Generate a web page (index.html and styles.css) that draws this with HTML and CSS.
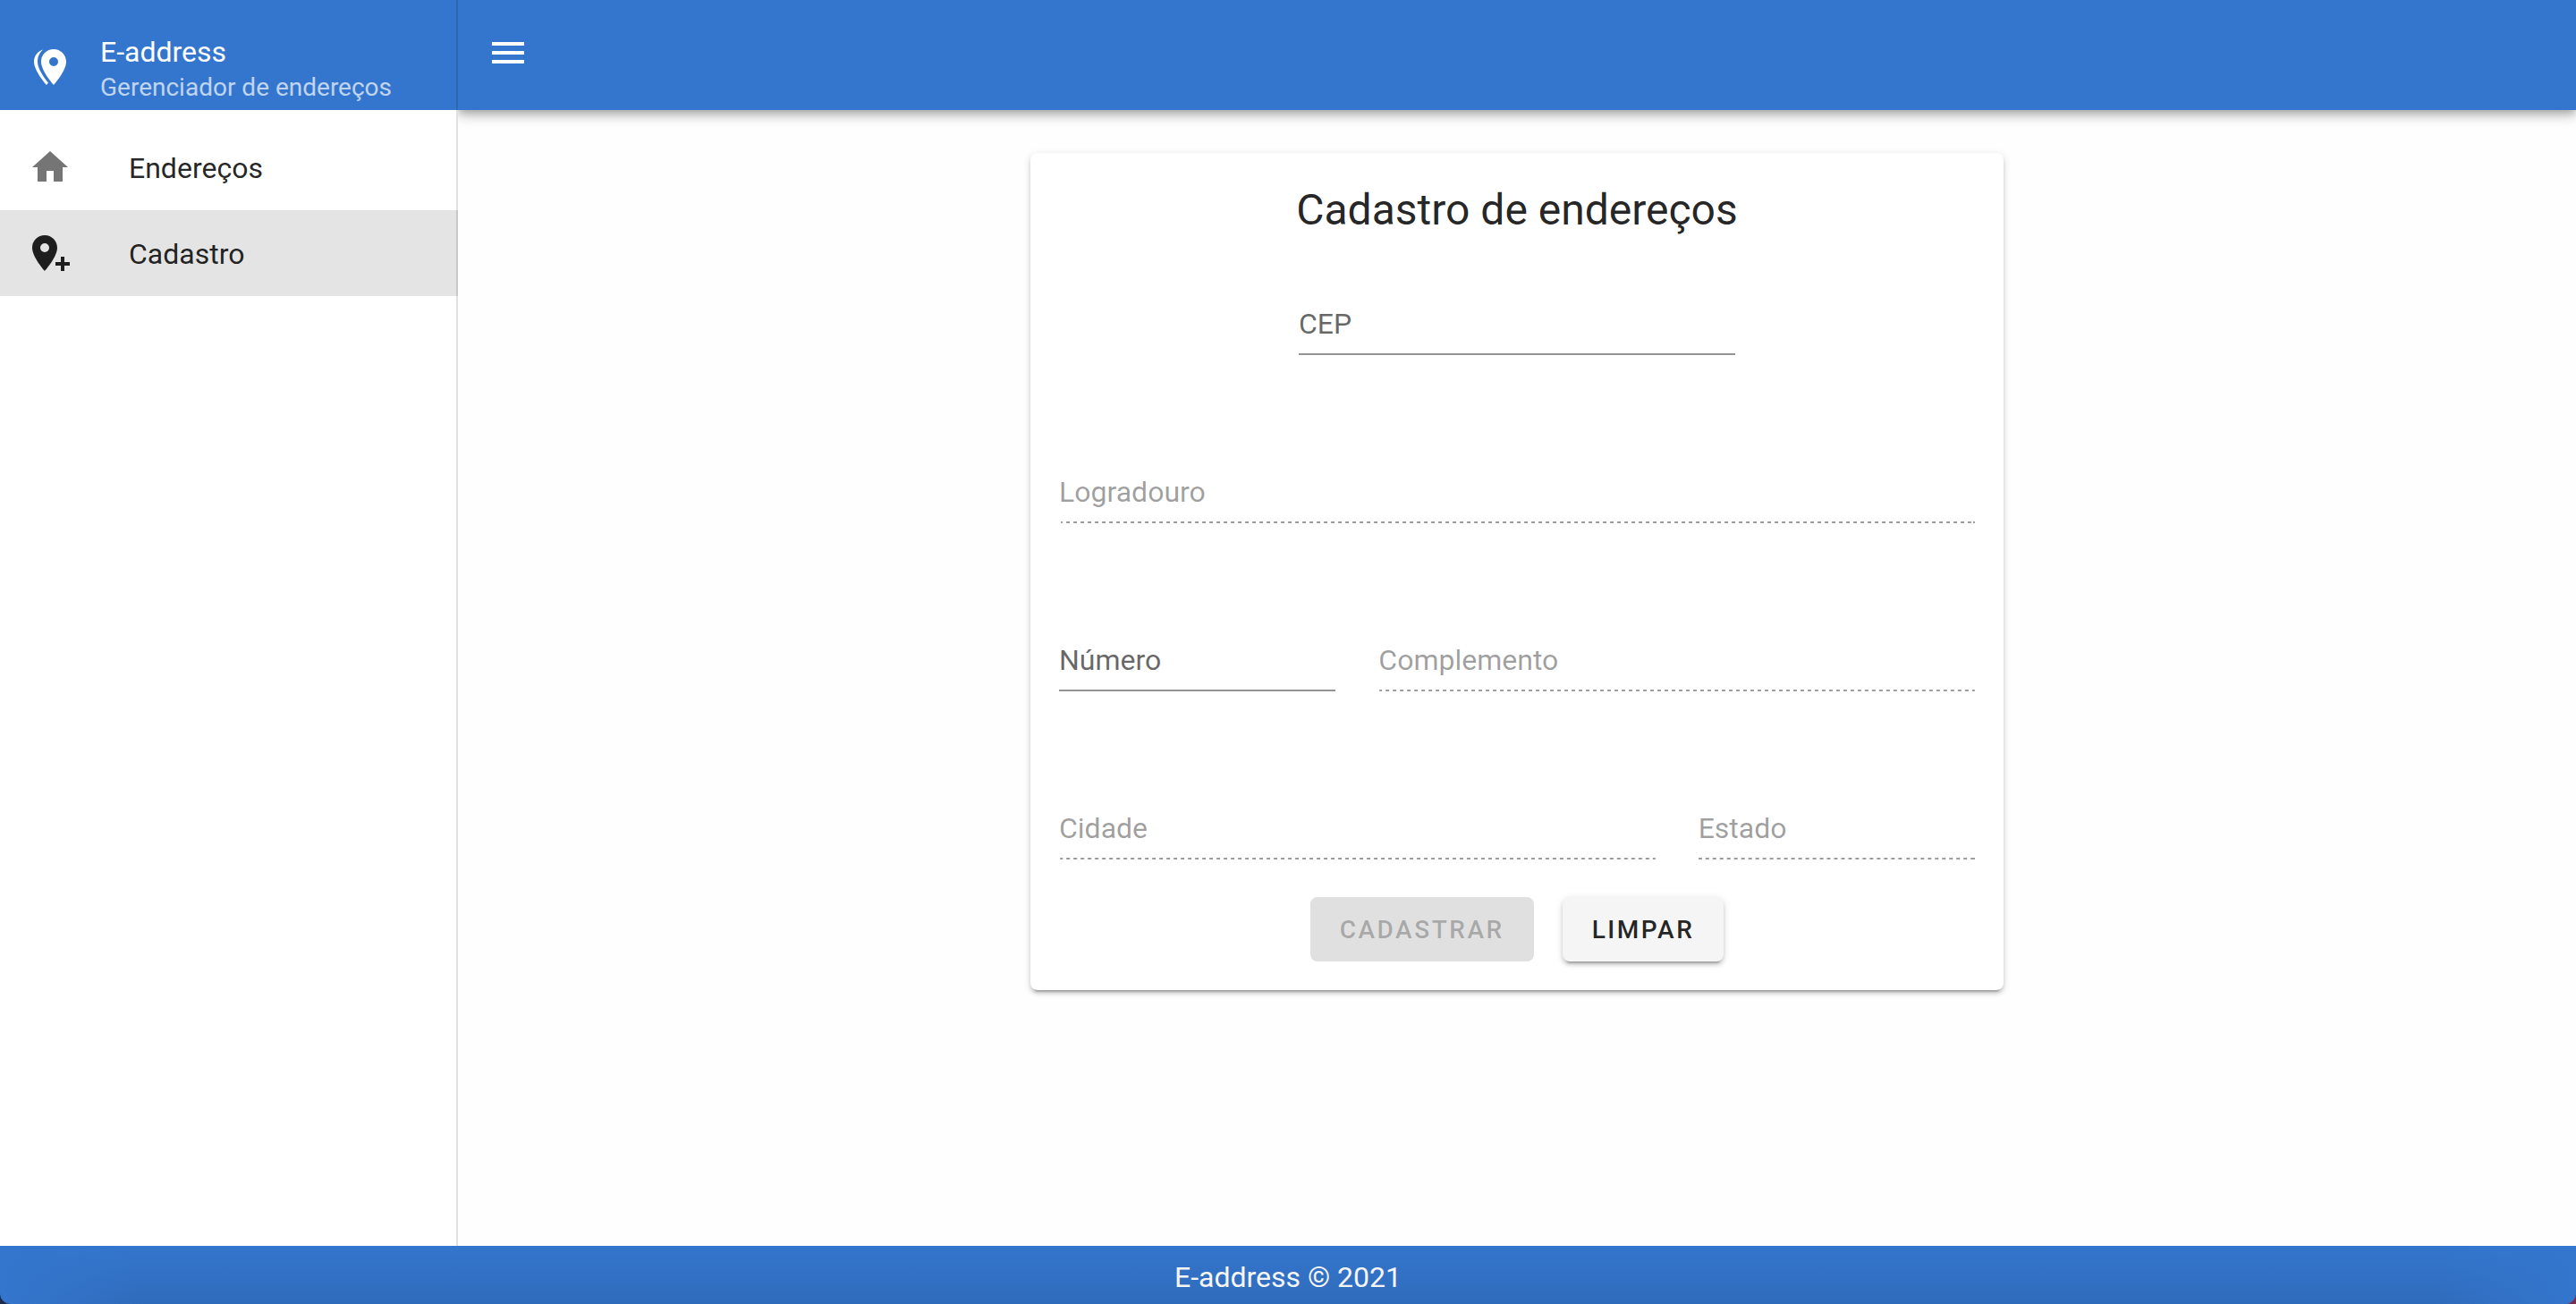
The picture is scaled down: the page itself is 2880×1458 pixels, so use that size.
FILE: index.html
```html
<!DOCTYPE html>
<html lang="pt-BR">
<head>
  <meta charset="utf-8">
  <meta name="viewport" content="width=device-width, initial-scale=1">
  <title>E-address</title>
  <link rel="stylesheet" href="styles.css">
</head>
<body>
  <div class="app">
    <aside class="drawer">
      <div class="brand">
        <svg class="icon" viewBox="0 0 24 24" aria-hidden="true"><path d="M14,11.5A2.5,2.5 0 0,0 16.5,9A2.5,2.5 0 0,0 14,6.5A2.5,2.5 0 0,0 11.5,9A2.5,2.5 0 0,0 14,11.5M14,2C17.86,2 21,5.13 21,9C21,14.25 14,22 14,22C14,22 7,14.25 7,9A7,7 0 0,1 14,2M5,9C5,13.5 10.08,19.66 11,20.81L10,22C10,22 3,14.25 3,9C3,5.83 5.11,3.15 8,2.29C6.16,3.94 5,6.33 5,9Z"/></svg>
        <div class="brand-text">
          <span class="brand-name">E-address</span>
          <span class="brand-tagline">Gerenciador de endereços</span>
        </div>
      </div>
      <nav class="menu">
        <a class="menu-item" href="#enderecos">
          <svg class="icon" viewBox="0 0 24 24" aria-hidden="true"><path d="M10,20V14H14V20H19V12H22L12,3L2,12H5V20H10Z"/></svg>
          <span class="menu-label">Endereços</span>
        </a>
        <a class="menu-item active" href="#cadastro" aria-current="page">
          <svg class="icon" viewBox="0 0 24 24" aria-hidden="true"><path d="M9,11.5A2.5,2.5 0 0,0 11.5,9A2.5,2.5 0 0,0 9,6.5A2.5,2.5 0 0,0 6.5,9A2.5,2.5 0 0,0 9,11.5M9,2C12.86,2 16,5.13 16,9C16,14.25 9,22 9,22C9,22 2,14.25 2,9A7,7 0 0,1 9,2M15,17H18V14H20V17H23V19H20V22H18V19H15V17Z"/></svg>
          <span class="menu-label">Cadastro</span>
        </a>
      </nav>
    </aside>

    <div class="content">
      <header class="app-bar">
        <button class="nav-toggle" type="button" aria-label="Abrir menu">
          <svg class="icon" viewBox="0 0 24 24" aria-hidden="true"><path d="M3,6H21V8H3V6M3,11H21V13H3V11M3,16H21V18H3V16Z"/></svg>
        </button>
      </header>
      <main class="main">
        <form class="card">
          <h1 class="card-title">Cadastro de endereços</h1>
          <div class="fields">
            <div class="field field-cep">
              <label for="cep">CEP</label>
              <input id="cep" type="text">
            </div>
            <div class="field field-full">
              <label for="logradouro">Logradouro</label>
              <input id="logradouro" type="text" disabled>
            </div>
            <div class="field field-short">
              <label for="numero">Número</label>
              <input id="numero" type="text">
            </div>
            <div class="field field-long">
              <label for="complemento">Complemento</label>
              <input id="complemento" type="text" disabled>
            </div>
            <div class="field field-long">
              <label for="cidade">Cidade</label>
              <input id="cidade" type="text" disabled>
            </div>
            <div class="field field-short">
              <label for="estado">Estado</label>
              <input id="estado" type="text" disabled>
            </div>
          </div>
          <div class="actions">
            <button class="btn" type="submit" disabled>CADASTRAR</button>
            <button class="btn" type="reset">LIMPAR</button>
          </div>
        </form>
      </main>
    </div>
  </div>
  <footer class="footer">
    <div class="footer-bar">E-address © 2021</div>
  </footer>
</body>
</html>
```

FILE: styles.css
```css
:root {
  --primary: #3476cd;
  --text: rgba(0, 0, 0, 0.87);
  --text-muted: rgba(0, 0, 0, 0.6);
  --text-disabled: rgba(0, 0, 0, 0.38);
  --bar-height: 123px;
}

* {
  box-sizing: border-box;
}

body {
  display: flex;
  flex-direction: column;
  min-height: 100vh;
  margin: 0;
  background: #fefefe;
  color: var(--text);
  font: 400 32px/40px Roboto, sans-serif;
}

.app {
  display: flex;
  flex: 1;
}

.icon {
  display: block;
  flex: none;
  width: 48px;
  height: 48px;
  fill: currentColor;
}

/* Navigation drawer */
.drawer {
  position: relative;
  z-index: 1;
  flex: none;
  width: 512px;
  background: #fff;
}

.drawer::after {
  content: "";
  position: absolute;
  inset: 0 0 0 auto;
  width: 2px;
  background: rgba(0, 0, 0, 0.12);
}

.brand {
  display: flex;
  align-items: center;
  gap: 32px;
  height: var(--bar-height);
  padding: 27px 32px 0;
  background: var(--primary);
  color: #fff;
}

.brand-text {
  display: flex;
  flex-direction: column;
  gap: 4px;
}

.brand-name {
  line-height: 42px;
}

.brand-tagline {
  color: rgba(255, 255, 255, 0.7);
  font-size: 28px;
  line-height: 30px;
}

.menu {
  padding: 16px 0;
}

.menu-item {
  display: flex;
  align-items: center;
  gap: 64px;
  height: 96px;
  padding: 0 32px;
  color: var(--text);
  text-decoration: none;
}

.menu-label {
  padding-top: 2px;
}

.menu-item .icon {
  color: rgba(0, 0, 0, 0.54);
}

.menu-item.active {
  background: #e4e4e4;
}

.menu-item.active .icon {
  color: var(--text);
}

/* Main column */
.content {
  display: flex;
  flex: 1;
  flex-direction: column;
  min-width: 0;
}

.app-bar {
  height: var(--bar-height);
  padding: 35px 32px 0;
  background: var(--primary);
  box-shadow:
    0 4px 8px -2px rgba(0, 0, 0, 0.2),
    0 8px 10px 0 rgba(0, 0, 0, 0.14),
    0 2px 20px 0 rgba(0, 0, 0, 0.12);
}

.nav-toggle {
  padding: 0;
  border: 0;
  background: none;
  color: #fff;
  cursor: pointer;
}

.main {
  padding: 48px 32px;
}

.card {
  max-width: 1088px;
  margin: 0 auto;
  padding: 32px;
  border-radius: 8px;
  background: #fff;
  box-shadow:
    0 6px 2px -4px rgba(0, 0, 0, 0.2),
    0 4px 4px 0 rgba(0, 0, 0, 0.14),
    0 2px 10px 0 rgba(0, 0, 0, 0.12);
}

.card-title {
  margin: 0 0 64px;
  font-size: 48px;
  font-weight: 400;
  line-height: 64px;
  text-align: center;
}

.fields {
  display: grid;
  grid-template-columns: repeat(12, 1fr);
  gap: 122px 48px;
}

.field {
  display: grid;
}

.field label,
.field input {
  grid-area: 1 / 1;
}

.field label {
  z-index: 1;
  align-self: start;
  justify-self: start;
  color: var(--text-muted);
  line-height: 62px;
}

.field:has(input:disabled) label {
  color: var(--text-disabled);
}

.field input {
  width: 100%;
  height: 66px;
  padding: 0;
  border: 0 solid rgba(0, 0, 0, 0.42);
  border-bottom-width: 2px;
  border-radius: 0;
  background: none;
  color: inherit;
  font: inherit;
  outline: none;
}

.field input:disabled {
  border-image: repeating-linear-gradient(90deg, var(--text-disabled) 0 4px, transparent 4px 8px) 2 repeat;
}

.field-cep {
  grid-column: 4 / span 6;
}

.field-full {
  grid-column: 1 / -1;
}

.field-short {
  grid-column: span 4;
}

.field-long {
  grid-column: span 8;
}

.actions {
  display: flex;
  justify-content: center;
  gap: 32px;
  margin-top: 42px;
}

.btn {
  height: 72px;
  padding: 2px 33px 0;
  border: 0;
  border-radius: 8px;
  background: #f5f5f5;
  box-shadow:
    0 6px 2px -4px rgba(0, 0, 0, 0.2),
    0 4px 4px 0 rgba(0, 0, 0, 0.14),
    0 2px 10px 0 rgba(0, 0, 0, 0.12);
  color: var(--text);
  font: 500 28px/40px Roboto, sans-serif;
  letter-spacing: 0.09em;
  cursor: pointer;
}

.btn:disabled {
  background: #e0e0e0;
  box-shadow: none;
  color: rgba(0, 0, 0, 0.26);
  cursor: default;
}

/* Footer */
.footer {
  background: linear-gradient(90deg, #1d2b4b 50%, #7a2b4a 50%);
}

.footer-bar {
  padding: 15px 32px 10px;
  border-radius: 0 0 12px 12px;
  background:
    linear-gradient(90deg, var(--primary), transparent 160px calc(100% - 160px), var(--primary)),
    linear-gradient(var(--primary), #2f6bbb);
  color: #f5f5f5;
  text-align: center;
}
```
